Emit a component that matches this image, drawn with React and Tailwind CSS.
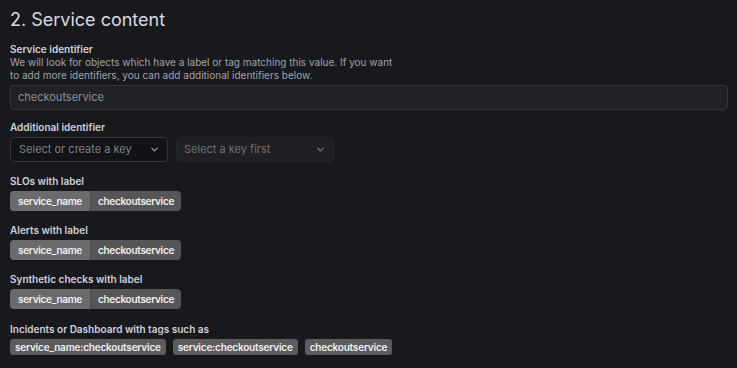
import { ChevronDown } from 'lucide-react';

const LabelChip = ({ name, value }) => (
    <div className="flex h-[20px] w-fit overflow-hidden rounded-[4px] text-[10px] font-semibold tracking-[-0.3px] text-[#f0f0f3]">
        <span className="flex items-center bg-[#6b6b6d] px-[8px]">{name}</span>
        <span className="flex items-center border-l border-[#4a4a4c] bg-[#565658] px-[7px]">{value}</span>
    </div>
);

const Tag = ({ children }) => (
    <span className="flex h-[16px] items-center rounded-[3px] bg-[#5c5c5e] px-[5px] text-[10px] font-semibold tracking-[-0.2px] text-[#f0f0f3]">
        {children}
    </span>
);

const Label = ({ children, className }) => (
    <div className={`text-[10px] font-semibold leading-[14px] text-[#d0d1dc] ${className || ''}`}>{children}</div>
);

const Section = ({ title, name, value }) => (
    <div className="mt-[12px]">
        <Label className="mb-[3px]">{title}</Label>
        <LabelChip name={name} value={value} />
    </div>
);

export default function App() {
    return (
        <div
            className="min-h-screen w-full bg-[#18191d] pl-[10px] pr-[9px] pt-[8px] text-[#ccccdc]"
            style={{ fontFamily: 'Inter, "Noto Sans", sans-serif' }}
        >
            <h2 className="text-[18px] font-normal leading-[24px] text-[#d8d9e0]">2. Service content</h2>

            <div className="mt-[10px]">
                <Label>Service identifier</Label>
                <p className="w-[390px] text-[10px] leading-[12.5px] text-[#a2a3ab]">
                    We will look for objects which have a label or tag matching this value. If you want
                    <br />
                    to add more identifiers, you can add additional identifiers below.
                </p>
                <div className="mt-[4px] flex h-[25px] items-center rounded-[4px] border border-[#36373b] bg-[#202125] px-[7px] text-[11px] text-[#8e8f96]">
                    checkoutservice
                </div>
            </div>

            <div className="mt-[10px]">
                <Label className="mb-[3px]">Additional identifier</Label>
                <div className="flex gap-[8px]">
                    <div className="flex h-[25px] w-[158px] items-center justify-between rounded-[4px] border border-[#35363a] bg-[#121317] pl-[8px] pr-[7px] text-[11px] text-[#7f8088]">
                        <span>Select or create a key</span>
                        <ChevronDown className="h-[11px] w-[11px] text-[#a0a1a8]" strokeWidth={2.5} />
                    </div>
                    <div className="flex h-[25px] w-[158px] items-center justify-between rounded-[4px] border border-[#25262a] bg-[#1f2024] pl-[7px] pr-[7px] text-[11px] text-[#6e6f76]">
                        <span>Select a key first</span>
                        <ChevronDown className="h-[11px] w-[11px] text-[#7c7d84]" strokeWidth={2.5} />
                    </div>
                </div>
            </div>

            <Section title="SLOs with label" name="service_name" value="checkoutservice" />
            <Section title="Alerts with label" name="service_name" value="checkoutservice" />
            <Section title="Synthetic checks with label" name="service_name" value="checkoutservice" />

            <div className="mt-[13px]">
                <Label className="mb-[3px]">Incidents or Dashboard with tags such as</Label>
                <div className="flex gap-[7px]">
                    <Tag>service_name:checkoutservice</Tag>
                    <Tag>service:checkoutservice</Tag>
                    <Tag>checkoutservice</Tag>
                </div>
            </div>
        </div>
    );
}
